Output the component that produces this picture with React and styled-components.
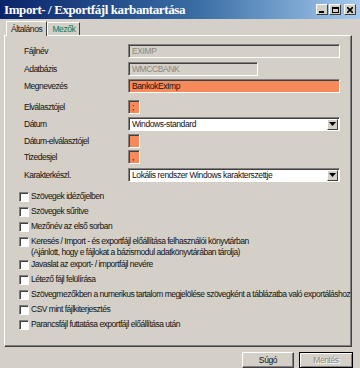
import styled, { createGlobalStyle } from "styled-components";

const GlobalStyle = createGlobalStyle`
  html, body {
    margin: 0;
    padding: 0;
    background: #d4d0c8;
  }
  body {
    font-family: "Liberation Sans", Arial, sans-serif;
    font-size: 8.5px;
    color: #111;
  }
`;

const Window = styled.div`
  width: 360px;
  height: 368px;
  display: flex;
  flex-direction: column;
  background: #d4d0c8;
  overflow: hidden;
`;

const TitleBar = styled.div`
  height: 19px;
  flex: none;
  display: flex;
  align-items: center;
  justify-content: space-between;
  padding: 0 4px 0 4px;
  background: linear-gradient(90deg, #0a246a 0%, #3a6ea5 55%, #a6caf0 100%);
`;

const Title = styled.div`
  font-family: "Liberation Serif", "Times New Roman", serif;
  font-weight: bold;
  font-size: 13px;
  letter-spacing: -0.4px;
  color: #fff;
  white-space: nowrap;
`;

const Controls = styled.div`
  display: flex;
  align-items: center;
  gap: 1px;
`;

const CtlButton = styled.div`
  width: 10px;
  height: 9px;
  margin-left: ${(p) => (p.$gap ? "2px" : "0")};
  background: #d4d0c8;
  border: 1px solid;
  border-color: #fff #404040 #404040 #fff;
  display: flex;
  align-items: center;
  justify-content: center;
  svg {
    display: block;
  }
`;

const Body = styled.div`
  flex: 1;
  display: flex;
  flex-direction: column;
  padding: 3px 8px 0 4px;
`;

const TabStrip = styled.div`
  display: flex;
  align-items: flex-end;
  height: 13px;
  padding-left: 2px;
  position: relative;
  z-index: 1;
`;

const Tab = styled.div`
  height: ${(p) => (p.$active ? "14px" : "12px")};
  margin-bottom: ${(p) => (p.$active ? "-1px" : "0")};
  padding: 0 4px;
  display: flex;
  align-items: center;
  background: #d4d0c8;
  border: 1px solid;
  border-bottom: none;
  border-color: #fff #404040 transparent #fff;
  color: ${(p) => p.$color || "#111"};
  letter-spacing: -0.4px;
`;

const Panel = styled.div`
  flex: none;
  height: 302px;
  border: 1px solid;
  border-color: #fff #404040 #404040 #fff;
  box-shadow: inset -1px -1px 0 #808080;
  padding: 8px 11px 0 19px;
  display: flex;
  flex-direction: column;
  overflow: hidden;
`;

const FormRow = styled.div`
  display: grid;
  grid-template-columns: 104px 1fr;
  align-items: center;
  height: ${(p) => p.$h || 14}px;
  margin-top: ${(p) => p.$mt || 0}px;
`;

const Label = styled.div`
  letter-spacing: -0.5px;
  white-space: nowrap;
`;

const Field = styled.div`
  box-sizing: border-box;
  height: 100%;
  width: ${(p) => p.$w || "100%"};
  border: 1px solid;
  border-color: #808080 #fff #fff #808080;
  box-shadow: inset 1px 1px 0 #404040;
  background: ${(p) =>
    p.$tone === "orange" ? "#f78a5a" : p.$tone === "white" ? "#fff" : "#d4d0c8"};
  color: ${(p) => (p.$tone === "gray" ? "#8a8782" : "#111")};
  padding: 0 3px;
  display: flex;
  align-items: center;
  letter-spacing: -0.4px;
  white-space: nowrap;
  overflow: hidden;
`;

const SelectBox = styled(Field)`
  justify-content: space-between;
  padding-right: 1px;
`;

const Arrow = styled.div`
  width: 11px;
  height: 11px;
  flex: none;
  box-sizing: border-box;
  background: #d4d0c8;
  border: 1px solid;
  border-color: #fff #404040 #404040 #fff;
  display: flex;
  align-items: center;
  justify-content: center;
`;

const CheckList = styled.div`
  display: flex;
  flex-direction: column;
  margin-top: 9px;
  margin-left: -5px;
`;

const CheckRow = styled.div`
  display: flex;
  align-items: flex-start;
  gap: 2px;
  min-height: ${(p) => p.$h || 14}px;
`;

const Box = styled.div`
  box-sizing: border-box;
  width: 10px;
  height: 10px;
  flex: none;
  margin-top: 1px;
  background: #fff;
  border: 1px solid;
  border-color: #808080 #fff #fff #808080;
  box-shadow: inset 1px 1px 0 #404040;
`;

const CheckText = styled.div`
  line-height: 11px;
  letter-spacing: -0.5px;
  white-space: nowrap;
`;

const Footer = styled.div`
  display: flex;
  justify-content: flex-end;
  gap: 5px;
  padding: 5px 0 0 0;
  margin-right: -1px;
`;

const Button = styled.div`
  box-sizing: border-box;
  width: ${(p) => (p.$default ? 54 : 52)}px;
  height: 16px;
  display: flex;
  align-items: center;
  justify-content: center;
  background: #d4d0c8;
  border: 1px solid;
  border-color: ${(p) => (p.$default ? "#000" : "#fff #404040 #404040 #fff")};
  box-shadow: ${(p) =>
    p.$default ? "inset 1px 1px 0 #fff, inset -1px -1px 0 #808080" : "inset -1px -1px 0 #808080"};
  color: ${(p) => (p.$disabled ? "#8a8782" : "#111")};
  text-shadow: ${(p) => (p.$disabled ? "1px 1px 0 #fff" : "none")};
  letter-spacing: -0.4px;
`;

const DownTri = () => (
  <svg width="7" height="4" viewBox="0 0 7 4">
    <path d="M0 0h7L3.5 4z" fill="#000" />
  </svg>
);

const fields = [
  { label: "Fájlnév", mt: 0, value: "EXIMP", tone: "gray" },
  { label: "Adatbázis", mt: 4, value: "WMCCBANK", tone: "gray", w: "130px" },
  { label: "Megnevezés", mt: 3, value: "BankokExImp", tone: "orange" },
  { label: "Elválasztójel", mt: 7, value: ";", tone: "orange", w: "12px" },
  { label: "Dátum", mt: 3, value: "Windows-standard", tone: "white", select: true },
  { label: "Dátum-elválasztójel", mt: 3, value: "", tone: "orange", w: "12px" },
  { label: "Tizedesjel", mt: 2, value: ",", tone: "orange", w: "12px" },
  {
    label: "Karakterkészl.",
    mt: 4,
    value: "Lokális rendszer Windows karakterszettje",
    tone: "white",
    select: true,
  },
];

const checks = [
  ["Szövegek idézőjelben"],
  ["Szövegek sűrítve"],
  ["Mezőnév az első sorban"],
  [
    "Keresés / Import - és exportfájl előállítása felhasználói könyvtárban",
    "(Ajánlott, hogy e fájlokat a bázismodul adatkönyvtárában tárolja)",
  ],
  ["Javaslat az export- / importfájl nevére"],
  ["Létező fájl felülírása"],
  ["Szövegmezőkben a numerikus tartalom megjelölése szövegként a táblázatba való exportáláshoz"],
  ["CSV mint fájlkiterjesztés"],
  ["Parancsfájl futtatása exportfájl előállítása után"],
];

export default function App() {
  return (
    <Window>
      <GlobalStyle />
      <TitleBar>
        <Title>Import- / Exportfájl karbantartása</Title>
        <Controls>
          <CtlButton>
            <svg width="6" height="6" viewBox="0 0 6 6">
              <rect x="0" y="4" width="5" height="2" fill="#000" />
            </svg>
          </CtlButton>
          <CtlButton>
            <svg width="7" height="6" viewBox="0 0 7 6">
              <rect x="0.5" y="0.5" width="6" height="5" fill="none" stroke="#000" />
              <rect x="0" y="0" width="7" height="2" fill="#000" />
            </svg>
          </CtlButton>
          <CtlButton $gap>
            <svg width="6" height="6" viewBox="0 0 6 6">
              <path d="M0 0L6 6M6 0L0 6" stroke="#000" strokeWidth="1.6" />
            </svg>
          </CtlButton>
        </Controls>
      </TitleBar>
      <Body>
        <TabStrip>
          <Tab $active>Általános</Tab>
          <Tab $color="#0a7a5a">Mezők</Tab>
        </TabStrip>
        <Panel>
          {fields.map((f) => (
            <FormRow key={f.label} $mt={f.mt}>
              <Label>{f.label}</Label>
              {f.select ? (
                <SelectBox $tone={f.tone}>
                  <span>{f.value}</span>
                  <Arrow>
                    <DownTri />
                  </Arrow>
                </SelectBox>
              ) : (
                <Field $tone={f.tone} $w={f.w}>
                  {f.value}
                </Field>
              )}
            </FormRow>
          ))}
          <CheckList>
            {checks.map((lines) => (
              <CheckRow key={lines[0]} $h={lines.length > 1 ? 23 : 15}>
                <Box />
                <CheckText>
                  {lines.map((l) => (
                    <div key={l}>{l}</div>
                  ))}
                </CheckText>
              </CheckRow>
            ))}
          </CheckList>
        </Panel>
        <Footer>
          <Button>Súgó</Button>
          <Button $default $disabled>
            Mentés
          </Button>
        </Footer>
      </Body>
    </Window>
  );
}
